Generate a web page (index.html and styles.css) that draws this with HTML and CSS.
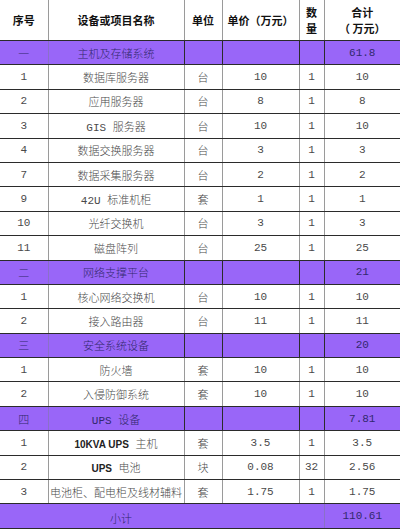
FILE: index.html
```html
<!DOCTYPE html>
<html lang="zh-CN">
<head>
<meta charset="utf-8">
<link rel="stylesheet" href="styles.css">
</head>
<body>
<table class="sheet">
  <colgroup>
    <col class="c-no"><col class="c-name"><col class="c-unit"><col class="c-price"><col class="c-qty"><col class="c-sum">
  </colgroup>
  <thead>
    <tr class="head">
      <th>序号</th>
      <th>设备或项目名称</th>
      <th>单位</th>
      <th>单价（万元）</th>
      <th><span class="line">数</span><span class="line">量</span></th>
      <th><span class="line">合计</span><span class="line">（ 万元）</span></th>
    </tr>
  </thead>
  <tbody>
    <tr class="group"><td>一</td><td>主机及存储系统</td><td></td><td></td><td></td><td>61.8</td></tr>
    <tr><td>1</td><td>数据库服务器</td><td>台</td><td>10</td><td>1</td><td>10</td></tr>
    <tr><td>2</td><td>应用服务器</td><td>台</td><td>8</td><td>1</td><td>8</td></tr>
    <tr><td>3</td><td>GIS 服务器</td><td>台</td><td>10</td><td>1</td><td>10</td></tr>
    <tr><td>4</td><td>数据交换服务器</td><td>台</td><td>3</td><td>1</td><td>3</td></tr>
    <tr><td>7</td><td>数据采集服务器</td><td>台</td><td>2</td><td>1</td><td>2</td></tr>
    <tr><td>9</td><td>42U 标准机柜</td><td>套</td><td>1</td><td>1</td><td>1</td></tr>
    <tr><td>10</td><td>光纤交换机</td><td>台</td><td>3</td><td>1</td><td>3</td></tr>
    <tr><td>11</td><td>磁盘阵列</td><td>台</td><td>25</td><td>1</td><td>25</td></tr>
    <tr class="group"><td>二</td><td>网络支撑平台</td><td></td><td></td><td></td><td>21</td></tr>
    <tr><td>1</td><td>核心网络交换机</td><td>台</td><td>10</td><td>1</td><td>10</td></tr>
    <tr><td>2</td><td>接入路由器</td><td>台</td><td>11</td><td>1</td><td>11</td></tr>
    <tr class="group"><td>三</td><td>安全系统设备</td><td></td><td></td><td></td><td>20</td></tr>
    <tr><td>1</td><td>防火墙</td><td>套</td><td>10</td><td>1</td><td>10</td></tr>
    <tr><td>2</td><td>入侵防御系统</td><td>套</td><td>10</td><td>1</td><td>10</td></tr>
    <tr class="group"><td>四</td><td>UPS 设备</td><td></td><td></td><td></td><td>7.81</td></tr>
    <tr><td>1</td><td><span class="bold">10KVA UPS</span> 主机</td><td>套</td><td>3.5</td><td>1</td><td>3.5</td></tr>
    <tr><td>2</td><td><span class="bold">UPS</span> 电池</td><td>块</td><td>0.08</td><td>32</td><td>2.56</td></tr>
    <tr><td>3</td><td>电池柜、配电柜及线材辅料</td><td>套</td><td>1.75</td><td>1</td><td>1.75</td></tr>
    <tr class="group total"><td colspan="5" class="total-label">小计</td><td>110.61</td></tr>
  </tbody>
</table>
</body>
</html>
```

FILE: styles.css
```css
html, body {
  margin: 0;
  padding: 0;
  background: #ffffff;
}

.sheet {
  border-collapse: collapse;
  table-layout: fixed;
  width: 400px;
  font-family: "Liberation Mono", "Noto Sans CJK SC", monospace;
  font-size: 11px;
  color: #4a4a4a;
}

.c-no { width: 48px; }
.c-name { width: 136px; }
.c-unit { width: 38px; }
.c-price { width: 77px; }
.c-qty { width: 25px; }
.c-sum { width: 76px; }

.sheet th,
.sheet td {
  padding: 0;
  text-align: center;
  vertical-align: middle;
  border-top: 1px solid #2b2b2b;
  border-bottom: 1px solid #2b2b2b;
  border-left: 1px solid #9a9a9a;
  border-right: 1px solid #9a9a9a;
  white-space: nowrap;
  overflow: hidden;
}

.sheet tr > :first-child { border-left: none; }
.sheet tr > :last-child { border-right: none; }

.head th {
  border-top: none;
  height: 40px;
  font-family: "Noto Sans CJK SC", sans-serif;
  font-weight: 700;
  font-size: 11px;
  line-height: 16px;
  color: #111111;
}

.head .line {
  display: block;
  height: 16px;
}

.sheet tbody tr {
  height: 24.4px;
}

.sheet tbody td {
  font-weight: 300;
}

.group td {
  background: #9966f8;
  color: #32286e;
  border-left-color: #2b2b2b;
  border-right-color: #2b2b2b;
}

.group td:first-child {
  border-right-color: #8a70c8;
}

.bold {
  font-family: "Liberation Sans", sans-serif;
  font-weight: 700;
  font-size: 10px;
  color: #222222;
}

.total-label {
  text-align: left !important;
  padding-left: 110px !important;
  padding-top: 4px !important;
}
```
